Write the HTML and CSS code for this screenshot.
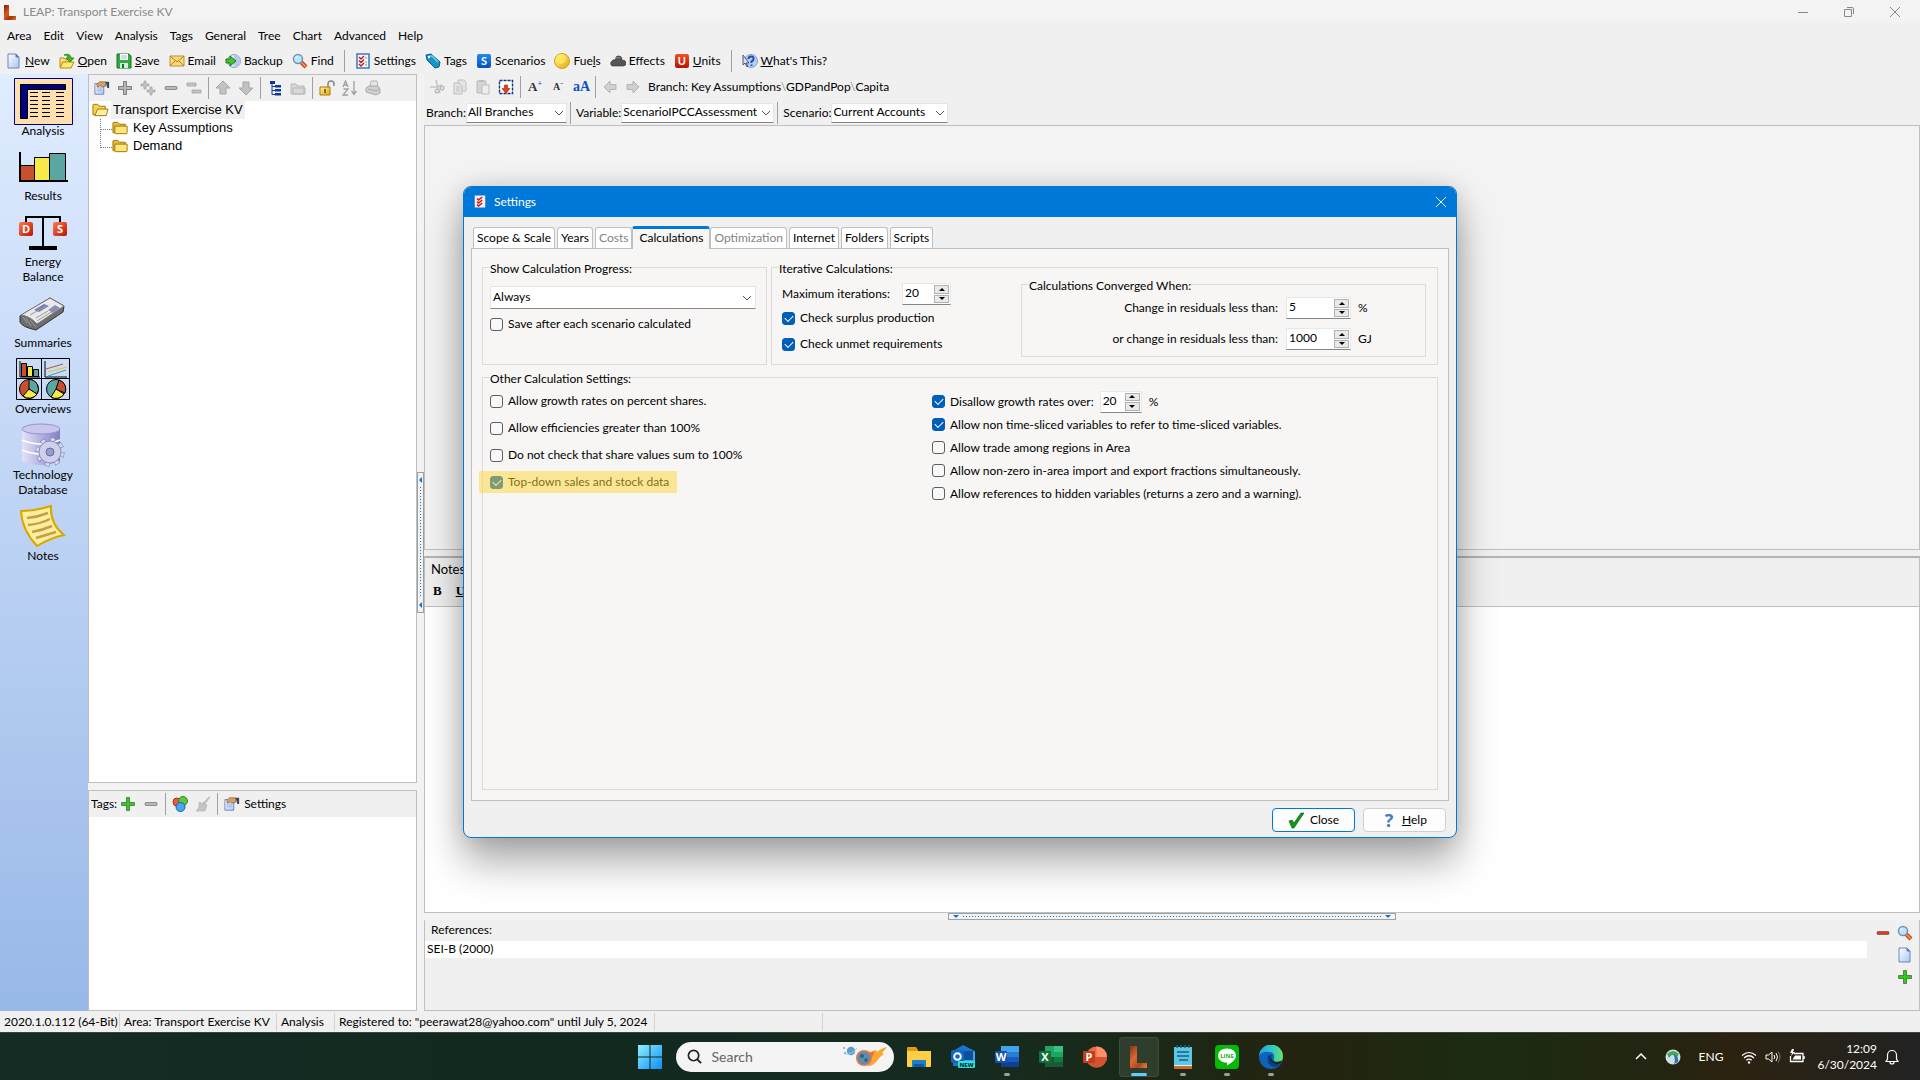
FILE: index.html
```html
<!DOCTYPE html>
<html lang="en">
<head>
<meta charset="utf-8">
<title>LEAP: Transport Exercise KV</title>
<link rel="stylesheet" href="styles.css">
</head>
<body>
<svg class="defs" aria-hidden="true">
  <defs>
    <linearGradient id="gold" x1="0" y1="0" x2="1" y2="1"><stop offset="0" stop-color="#fff3a0"/><stop offset="1" stop-color="#e0a80c"/></linearGradient>
    <linearGradient id="paper" x1="0" y1="0" x2="1" y2="1"><stop offset="0" stop-color="#fff"/><stop offset="1" stop-color="#a9c6ee"/></linearGradient>
    <linearGradient id="red" x1="0" y1="0" x2="1" y2="1"><stop offset="0" stop-color="#ff7a50"/><stop offset="1" stop-color="#b81400"/></linearGradient>
    <linearGradient id="lava" x1="0" y1="0" x2="1" y2="1"><stop offset="0" stop-color="#7a1f06"/><stop offset=".4" stop-color="#d9581c"/><stop offset=".7" stop-color="#a23408"/><stop offset="1" stop-color="#e07830"/></linearGradient>
    <linearGradient id="win" x1="0" y1="0" x2="1" y2="1"><stop offset="0" stop-color="#8df0ff"/><stop offset="1" stop-color="#0a8ff5"/></linearGradient>
    <linearGradient id="lilac" x1="0" y1="0" x2="1" y2="0"><stop offset="0" stop-color="#e4e2fa"/><stop offset=".5" stop-color="#b4b1e0"/><stop offset="1" stop-color="#8280bd"/></linearGradient>
    <linearGradient id="edgeTop" x1="0" y1="0" x2="1" y2="0"><stop offset="0" stop-color="#1aa5dc"/><stop offset=".6" stop-color="#36c9c0"/><stop offset="1" stop-color="#72e05a"/></linearGradient>
  </defs>
  <symbol id="i-leap" viewBox="0 0 16 16"><path d="M2 1h5v11h7v4H2z" fill="url(#lava)"/></symbol>
  <symbol id="i-doc" viewBox="0 0 16 16"><path d="M2 1h8l3 3v11H2z" fill="url(#paper)" stroke="#6c86c0"/><path d="M10 1v3h3" fill="#5c7dbd" stroke="#5c7dbd"/></symbol>
  <symbol id="i-open" viewBox="0 0 16 16"><path d="M1 14V5h4l1 1h6v2" fill="url(#gold)" stroke="#b58a12"/><path d="M1 15l3-6h11l-3 6z" fill="#ffe773" stroke="#b58a12"/><path d="M5 2c4-2 7 0 7 3h3l-4 4-4-4h2c0-2-2-3-4-3z" fill="#3cb82a" stroke="#14760c" stroke-width=".7"/></symbol>
  <symbol id="i-save" viewBox="0 0 16 16"><path d="M1 1h12l2 2v12H1z" fill="#2faa3c" stroke="#14742a"/><path d="M4 1h8v6H4z" fill="#fff"/><path d="M5 3h6M5 5h6" stroke="#9bc"/><path d="M4 10h8v5H4z" fill="#d7ecd9"/><path d="M6 11h2v4H6z" fill="#14742a"/></symbol>
  <symbol id="i-mail" viewBox="0 0 16 16"><path d="M1 3h14v10H1z" fill="#fbd87c" stroke="#c08e2c"/><path d="M1 3l7 6 7-6M1 13l5-5M15 13l-5-5" fill="none" stroke="#b5832a"/></symbol>
  <symbol id="i-backup" viewBox="0 0 16 16"><circle cx="9" cy="8" r="6.500" fill="#dfe8f5" stroke="#8aa4cc"/><path d="M9 1.500a6.500 6.500 0 0 1 0 13z" fill="#b6c9e6"/><path d="M1 6h4V3l6 5-6 5v-3H1z" fill="#46c22e" stroke="#187b12"/></symbol>
  <symbol id="i-find" viewBox="0 0 16 16"><path d="M8 8l6 6" stroke="#b33c10" stroke-width="4"/><path d="M9 9l5 5" stroke="#ff8a3c" stroke-width="2"/><circle cx="6" cy="6" r="4.500" fill="#bfe3fa" stroke="#6f95b5" stroke-width="1.500"/><path d="M3.500 6a3 3 0 0 1 2-2.500" stroke="#fff" fill="none"/></symbol>
  <symbol id="i-check" viewBox="0 0 16 16"><path d="M2 1h12v14H2z" fill="#f4f8ff" stroke="#3a78bf" stroke-width="1.500"/><path d="M4 4l2 2 3-3M4 7.500l2 2 3-3M4 11l2 2 3-3" stroke="#c5161c" stroke-width="1.400" fill="none"/><path d="M10 5h2M10 9h2M10 12h2" stroke="#889"/></symbol>
  <symbol id="i-tag" viewBox="0 0 16 16"><path d="M1 2l5-1 9 8-1 5-4 1-8-8z" fill="#1595c9" stroke="#0a5f8c"/><path d="M5 3h2l6 6" stroke="#6fd0f0" fill="none" stroke-width="1.500"/><circle cx="4" cy="4" r="1.200" fill="#fff"/></symbol>
  <symbol id="i-fuel" viewBox="0 0 16 16"><circle cx="8" cy="8" r="7.500" fill="url(#gold)" stroke="#d6a300"/><circle cx="7" cy="6" r="5" fill="#fff15a" opacity=".6"/></symbol>
  <symbol id="i-cloud" viewBox="0 0 16 16"><path d="M2 13a3 3 0 0 1 0-5q1-2 3-1 1-5 4-4 3 0 3 4 4 0 4 3t-3 3z" fill="#555" stroke="#333" stroke-width=".6"/><path d="M5 6q2-3 5-1" stroke="#999" fill="none"/></symbol>
  <symbol id="i-what" viewBox="0 0 16 16"><circle cx="9" cy="8" r="6.500" fill="#b9cff2" stroke="#7d9cd6"/><path d="M6.500 6q0-2.500 2.700-2.500T11.500 6q0 1.500-2 2.500v1.500M9.500 11.500v1.500" stroke="#1d4fb5" stroke-width="2" fill="none"/><path d="M1 2v10l2-2 2 4 1-1-2-3h3z" fill="#dde" stroke="#557"/></symbol>
  <symbol id="i-props" viewBox="0 0 18 16"><path d="M1 3h10v12H1z" fill="url(#paper)" stroke="#6c7fc0"/><path d="M3 7h6M3 9h6M3 11h6" stroke="#9db2df"/><path d="M3 4l3-3h7v5l-4 1-2-2-3 2z" fill="#d9a063" stroke="#7e5226" stroke-width=".7"/><path d="M13 1h4v7h-2z" fill="#3c4656"/></symbol>
  <symbol id="i-plus" viewBox="0 0 16 16"><path d="M6.500 1.500h3v5h5v3h-5v5h-3v-5h-5v-3h5z" fill="currentColor" stroke="#0006"/></symbol>
  <symbol id="i-plus2" viewBox="0 0 16 16"><path d="M4 1h2v3h3v2H6v3H4V6H1V4h3zM10 7h2v3h3v2h-3v3h-2v-3H7v-2h3z" fill="#c4c4c4" stroke="#a0a0a0" stroke-width=".7"/></symbol>
  <symbol id="i-minus" viewBox="0 0 16 16"><rect x="2" y="6.500" width="12" height="3" rx="1" fill="currentColor" stroke="#0005"/></symbol>
  <symbol id="i-minus2" viewBox="0 0 16 16"><path d="M1 3h9v3H1zM6 10h9v3H6z" fill="#c4c4c4" stroke="#a3a3a3" stroke-width=".8"/></symbol>
  <symbol id="i-up" viewBox="0 0 16 16"><path d="M8 1l7 7h-4v6H5V8H1z" fill="#c2c2c2" stroke="#a6a6a6"/></symbol>
  <symbol id="i-down" viewBox="0 0 16 16"><path d="M8 15l7-7h-4V2H5v6H1z" fill="#c2c2c2" stroke="#a6a6a6"/></symbol>
  <symbol id="i-left" viewBox="0 0 16 16"><path d="M2 8l6-6v3.500h6v5H8V14z" fill="#d0d0d0" stroke="#b4b4b4"/></symbol>
  <symbol id="i-right" viewBox="0 0 16 16"><path d="M14 8L8 2v3.500H2v5h6V14z" fill="#d0d0d0" stroke="#b4b4b4"/></symbol>
  <symbol id="i-tree" viewBox="0 0 16 16"><path d="M3 1h5v3H3zM8 5h6v2.500H8zM8 9h6v2.500H8zM8 13h6v2.500H8z" fill="#0b3a9c"/><path d="M5 4v10.500h3M5 6.500h3M5 10.500h3" stroke="#0b3a9c" fill="none"/></symbol>
  <symbol id="i-gfolder" viewBox="0 0 16 16"><path d="M1 14V4h5l1 2h7v8zM3 14V8h12v6z" fill="#d8d8d8" stroke="#b8b8b8"/></symbol>
  <symbol id="i-lock" viewBox="0 0 16 16"><path d="M9 8V4a3 3 0 0 1 6 0v2" fill="none" stroke="#888" stroke-width="1.500"/><path d="M1 7h10v8H1z" fill="url(#gold)" stroke="#a97908"/><path d="M6 9v4" stroke="#6e4c00" stroke-width="1.500"/></symbol>
  <symbol id="i-sort" viewBox="0 0 16 16"><path d="M1 7l2.500-6L6 7M2 5h3M1.500 9H6l-5 6h5M12 1v12M9.500 11l2.500 3.500L14.500 11" fill="none" stroke="#a0a0a0" stroke-width="1.300"/></symbol>
  <symbol id="i-print" viewBox="0 0 16 16"><path d="M5 6l1-5h6l1 6z" fill="#e4e4e4" stroke="#b5b5b5"/><path d="M1 8l3-2h9l2 3v4l-4 2-10-3z" fill="#cfcfcf" stroke="#ababab"/><path d="M3 9l8 2 3-2" fill="none" stroke="#aaa"/></symbol>
  <symbol id="i-cut" viewBox="0 0 16 16"><path d="M1 8h7l5-2M7 1l2 8 2 5" fill="none" stroke="#c4c4c4" stroke-width="1.500"/><circle cx="13" cy="9" r="1.800" fill="none" stroke="#bbb" stroke-width="1.500"/><circle cx="8" cy="12" r="1.800" fill="none" stroke="#bbb" stroke-width="1.500"/></symbol>
  <symbol id="i-copy" viewBox="0 0 16 16"><path d="M6 1h6l2 2v9H6z" fill="#e4e4e4" stroke="#c0c0c0"/><path d="M2 4h5l3 3v8H2z" fill="#e4e4e4" stroke="#bdbdbd"/><path d="M4 8h4M4 10h4M4 12h4" stroke="#c4c4c4"/></symbol>
  <symbol id="i-paste" viewBox="0 0 16 16"><path d="M2 2h9v12H2z" fill="#d4d4d4" stroke="#bdbdbd"/><path d="M4 1h5v2H4z" fill="#bbb"/><path d="M7 6h7v9H7z" fill="#ededed" stroke="#bdbdbd"/></symbol>
  <symbol id="i-insert" viewBox="0 0 16 16"><path d="M1.500 1.500h13v13h-13z" fill="#fff" stroke="#16307e" stroke-width="1.400" stroke-dasharray="3 1"/><path d="M6.500 6h3v3.500h2.500l-4 5-4-5h2.500z" fill="#e3401a" stroke="#a92000" stroke-width=".6"/></symbol>
  <symbol id="i-folder" viewBox="0 0 18 14"><path d="M1 12V2q0-1 1-1h4l2 2h6v9z" fill="#e9bd2e" stroke="#9c7408"/><path d="M4 13q-1 0-1-1V5h13v7q0 1-1 1z" fill="#ffe57a" stroke="#9c7408"/></symbol>
  <symbol id="i-folder-open" viewBox="0 0 18 14"><path d="M1 12V2q0-1 1-1h4l2 2h6v9z" fill="#f6d24f" stroke="#9c7408"/><path d="M3 13L6 6h11l-2 7z" fill="#fff09c" stroke="#9c7408"/></symbol>
  <symbol id="i-balls" viewBox="0 0 16 16"><circle cx="5" cy="6" r="4" fill="#ef5a3a" stroke="#b52c12"/><circle cx="11" cy="5" r="4.500" fill="#5fc73d" stroke="#2c8a14"/><circle cx="8.500" cy="11" r="4.500" fill="#4aa6ee" stroke="#1762ae"/></symbol>
  <symbol id="i-brush" viewBox="0 0 16 16"><path d="M14 1h1l-5 7-2-1zM4 6l8 3-2 6H1q4-3 3-9z" fill="#c4c4c4" stroke="#b4b4b4" stroke-width=".7"/></symbol>
  <symbol id="i-chev" viewBox="0 0 10 10"><path d="M1 3l4 4 4-4" fill="none" stroke="#555"/></symbol>
  <symbol id="i-x" viewBox="0 0 10 10"><path d="M0 0l10 10M10 0L0 10" fill="none" stroke="currentColor"/></symbol>
</svg>

<div class="app">
  <header class="titlebar">
    <svg class="icon"><use href="#i-leap"/></svg>
    <h1 class="titlebar-text">LEAP: Transport Exercise KV</h1>
    <div class="caption-buttons">
      <button aria-label="Minimize"><svg viewBox="0 0 10 10"><path d="M0 5.500h10" stroke="#888"/></svg></button>
      <button aria-label="Restore"><svg viewBox="0 0 10 10"><path d="M.5 2.500h7v7h-7zM3 .5h5q1.500 0 1.500 1.500v5" fill="none" stroke="#888"/></svg></button>
      <button aria-label="Close window"><svg viewBox="0 0 10 10"><use href="#i-x"/></svg></button>
    </div>
  </header>

  <nav class="menubar" aria-label="Menu">
    <button>Area</button><button>Edit</button><button>View</button><button>Analysis</button><button>Tags</button><button>General</button><button>Tree</button><button>Chart</button><button>Advanced</button><button>Help</button>
  </nav>

  <div class="toolbar" role="toolbar" aria-label="Main">
    <button><svg class="icon"><use href="#i-doc"/></svg><span><u>N</u>ew</span></button>
    <button><svg class="icon"><use href="#i-open"/></svg><span><u>O</u>pen</span></button>
    <button><svg class="icon"><use href="#i-save"/></svg><span><u>S</u>ave</span></button>
    <button><svg class="icon"><use href="#i-mail"/></svg><span>Email</span></button>
    <button><svg class="icon"><use href="#i-backup"/></svg><span>Backup</span></button>
    <button><svg class="icon"><use href="#i-find"/></svg><span>Find</span></button>
    <i class="sep"></i>
    <button><svg class="icon"><use href="#i-check"/></svg><span>Settings</span></button>
    <button><svg class="icon"><use href="#i-tag"/></svg><span>Tags</span></button>
    <button><b class="tile tile-blue">S</b><span>Scenarios</span></button>
    <button><svg class="icon"><use href="#i-fuel"/></svg><span>Fue<u>l</u>s</span></button>
    <button><svg class="icon"><use href="#i-cloud"/></svg><span>Effects</span></button>
    <button><b class="tile tile-red">U</b><span><u>U</u>nits</span></button>
    <i class="sep"></i>
    <button><svg class="icon"><use href="#i-what"/></svg><span><u>W</u>hat's This?</span></button>
  </div>

  <main class="workspace">
    <nav class="views" aria-label="Views">
      <button class="view view-current"><svg class="view-icon" width="59" height="47" viewBox="0 0 59 47"><path d="M.5.500h58v46H.5z" fill="#ffdfae" stroke="#000080"/><path d="M6.500 6.500h45v5h-38v29h-7z" fill="#000080" stroke="#000"/><path d="M16 14.500h8M28 14.500h8M42 14.500h8M16 18.500h8M28 18.500h8M42 18.500h8M16 22.500h8M28 22.500h8M42 22.500h8M16 26.500h8M28 26.500h8M42 26.500h8M16 30.500h8M28 30.500h8M42 30.500h8M16 34.500h8M28 34.500h8M42 34.500h8M16 38.500h8M28 38.500h8M42 38.500h8" stroke="#000"/></svg>Analysis</button>
      <button class="view"><svg class="view-icon" width="50" height="44" viewBox="0 0 50 44"><path d="M2.500 21.500h14v15h-14z" fill="#c8502f" stroke="#000"/><path d="M16.500 13.500h15v23h-15z" fill="#f5ea4a" stroke="#000"/><path d="M31.500 9.500h16v27h-16z" fill="#5ba6a0" stroke="#000"/><path d="M2 8v29h48" fill="none" stroke="#000" stroke-width="2"/></svg>Results</button>
      <button class="view"><svg class="view-icon" width="50" height="44" viewBox="0 0 50 44"><path d="M8 12V7h34v5M25 7v30" fill="none" stroke="#000" stroke-width="2"/><path d="M11 36h28v4H11z"/><rect x="1" y="12" width="14" height="14" rx="2" fill="url(#red)"/><rect x="35" y="12" width="14" height="14" rx="2" fill="url(#red)"/><text class="glyph" x="8" y="23">D</text><text class="glyph" x="42" y="23">S</text></svg>Energy<br>Balance</button>
      <button class="view"><svg class="view-icon" width="50" height="44" viewBox="0 0 50 44"><path d="M2 25L32 7l14 8-1 6-27 18Q4 36 2 31z" fill="#6e6e6e" stroke="#333"/><path d="M3 24L32 7l14 8-27 18Q12 25 3 24z" fill="#e9e9e9" stroke="#777"/><path d="M16 19l10-6 5 2-10 6z" fill="#7b7bbd"/><path d="M30 19l7-5 5 3-7 5z" fill="#8b8bb5"/><path d="M12 24l16-9M18 27l12-7M19 30l16-10M12 29l6 7M8 27l5 8M5 26l4 6" stroke="#999"/></svg>Summaries</button>
      <button class="view"><svg class="view-icon" width="54" height="44" viewBox="0 0 54 44"><path d="M.5 1.500h53v41H.5zM25.500 1.500v41M.5 21.500h53" fill="none" stroke="#000"/><path d="M5.500 6.500h5v13h-5z" fill="#c8502f" stroke="#000"/><path d="M11.500 9.500h5v10h-5z" fill="#f5ea4a" stroke="#000"/><path d="M17.500 12.500h5v7h-5z" fill="#5ba6a0" stroke="#000"/><path d="M4 4v16h20M29 4v16h22" fill="none" stroke="#000"/><path d="M30 12l17-5" stroke="#c8502f"/><path d="M32 15l19-5" stroke="#e8c030"/><path d="M32 19l18-6" stroke="#4a9a94"/><circle cx="13" cy="32" r="9.500" fill="#c8502f" stroke="#000"/><path d="M13 32V22.500a9.500 9.500 0 0 1 8 14.500z" fill="#5ba6a0" stroke="#000"/><path d="M13 32l8 5a9.500 9.500 0 0 1-14 2z" fill="#f5ea4a" stroke="#000"/><circle cx="40" cy="32" r="9.500" fill="#5ba6a0" stroke="#000"/><path d="M40 32l3-9a9.500 9.500 0 0 1 6 13z" fill="#c8502f" stroke="#000"/><path d="M40 32l8 5a9.500 9.500 0 0 1-13 3z" fill="#f5ea4a" stroke="#000"/></svg>Overviews</button>
      <button class="view"><svg class="view-icon" width="50" height="44" viewBox="0 0 50 44"><path d="M4 6v32q18 8 38 0V6z" fill="url(#lilac)"/><ellipse cx="23" cy="6" rx="19" ry="5" fill="#c9c7ee" stroke="#9794cc"/><path d="M4 17q19 8 38 0M4 27q19 8 38 0" fill="none" stroke="#fff" stroke-width="1.500"/><circle cx="32" cy="29" r="12.500" fill="none" stroke="#7775ad" stroke-width="4" stroke-dasharray="5 4.800"/><circle cx="32" cy="29" r="12.500" fill="none" stroke="#d8d8f0" stroke-width="3" stroke-dasharray="4 5.800" stroke-dashoffset="-.5"/><circle cx="32" cy="29" r="11" fill="#cfd0ea" stroke="#8f8dc0"/><circle cx="32" cy="29" r="4" fill="#9a9acb" stroke="#6b6aa8"/></svg>Technology<br>Database</button>
      <button class="view"><svg class="view-icon" width="50" height="44" viewBox="0 0 50 44"><path d="M3 7q14 0 30-5-1 18 13 29-14 3-27 11Q4 26 3 7z" fill="#ffee9c" stroke="#d9a800" stroke-width="2"/><path d="M9 14q11-1 21-5M10 21q12-1 22-6M14 28q11-2 20-6M18 34q10-3 20-6" fill="none" stroke="#c39f4a" stroke-width="2.500"/></svg>Notes</button>
    </nav>

    <div class="left-pane">
      <section class="tree-panel">
        <div class="iconbar" role="toolbar" aria-label="Tree">
          <button aria-label="Properties"><svg class="icon"><use href="#i-props"/></svg></button>
          <button class="gray" aria-label="Add"><svg class="icon"><use href="#i-plus"/></svg></button>
          <button aria-label="Add several"><svg class="icon"><use href="#i-plus2"/></svg></button>
          <button class="gray" aria-label="Delete"><svg class="icon"><use href="#i-minus"/></svg></button>
          <button aria-label="Delete several"><svg class="icon"><use href="#i-minus2"/></svg></button>
          <i class="sep"></i>
          <button aria-label="Move up"><svg class="icon"><use href="#i-up"/></svg></button>
          <button aria-label="Move down"><svg class="icon"><use href="#i-down"/></svg></button>
          <i class="sep"></i>
          <button aria-label="Expand"><svg class="icon"><use href="#i-tree"/></svg></button>
          <button aria-label="Folder"><svg class="icon"><use href="#i-gfolder"/></svg></button>
          <i class="sep"></i>
          <button aria-label="Unlock"><svg class="icon"><use href="#i-lock"/></svg></button>
          <button aria-label="Sort"><svg class="icon"><use href="#i-sort"/></svg></button>
          <button aria-label="Print"><svg class="icon"><use href="#i-print"/></svg></button>
        </div>
        <ul class="tree">
          <li><span class="node"><svg><use href="#i-folder-open"/></svg><span class="node-name node-selected">Transport Exercise KV</span></span>
            <ul class="branches">
              <li><span class="node"><svg><use href="#i-folder"/></svg><span class="node-name">Key Assumptions</span></span></li>
              <li><span class="node"><svg><use href="#i-folder"/></svg><span class="node-name">Demand</span></span></li>
            </ul>
          </li>
        </ul>
      </section>
      <section class="tags-panel">
        <div class="iconbar" role="toolbar" aria-label="Tags">
          <span>Tags:</span>
          <button class="green" aria-label="Add tag"><svg class="icon"><use href="#i-plus"/></svg></button>
          <button class="gray" aria-label="Remove tag"><svg class="icon"><use href="#i-minus"/></svg></button>
          <i class="sep"></i>
          <button aria-label="Colors"><svg class="icon"><use href="#i-balls"/></svg></button>
          <button aria-label="Clear"><svg class="icon"><use href="#i-brush"/></svg></button>
          <i class="sep"></i>
          <button class="with-text"><svg class="icon"><use href="#i-props"/></svg>Settings</button>
        </div>
      </section>
    </div>

    <div class="splitter-v"><div class="handle-v"></div></div>

    <div class="right-pane">
      <div class="iconbar data-bar" role="toolbar" aria-label="Data">
        <button aria-label="Cut"><svg class="icon"><use href="#i-cut"/></svg></button>
        <button aria-label="Copy"><svg class="icon"><use href="#i-copy"/></svg></button>
        <button aria-label="Paste"><svg class="icon"><use href="#i-paste"/></svg></button>
        <button aria-label="Insert"><svg class="icon"><use href="#i-insert"/></svg></button>
        <i class="sep"></i>
        <button class="serif-lg" aria-label="Larger font">A<sup>+</sup></button>
        <button class="serif-sm" aria-label="Smaller font">A<sup>-</sup></button>
        <button class="serif-blue" aria-label="Font">aA</button>
        <i class="sep"></i>
        <button aria-label="Back"><svg class="icon"><use href="#i-left"/></svg></button>
        <button aria-label="Forward"><svg class="icon"><use href="#i-right"/></svg></button>
        <span class="path">Branch: Key Assumptions<span class="slash">\</span>GDPandPop<span class="slash">\</span>Capita</span>
      </div>
      <div class="filters">
        <label for="f-branch">Branch:</label>
        <span class="select select-s"><select id="f-branch"><option>All Branches</option></select><svg><use href="#i-chev"/></svg></span>
        <i class="sep"></i>
        <label for="f-variable">Variable:</label>
        <span class="select select-l"><select id="f-variable"><option>ScenarioIPCCAssessment</option></select><svg><use href="#i-chev"/></svg></span>
        <i class="sep"></i>
        <label for="f-scenario">Scenario:</label>
        <span class="select select-m"><select id="f-scenario"><option>Current Accounts</option></select><svg><use href="#i-chev"/></svg></span>
      </div>
      <section class="chart-area"></section>
      <section class="notes">
        <header class="notes-head">
          <h2 class="notes-title">Notes</h2>
          <div class="notes-tools"><button>B</button><button><u>U</u></button></div>
        </header>
      </section>
      <div class="splitter-h"><div class="handle-h"></div></div>
      <section class="refs">
        <div class="refs-main">
          <h2 class="refs-title">References:</h2>
          <p class="refs-item">SEI-B (2000)</p>
        </div>
        <div class="refs-tools">
          <button class="redi" aria-label="Remove reference"><svg class="icon"><use href="#i-minus"/></svg></button>
          <button aria-label="Find reference"><svg class="icon"><use href="#i-find"/></svg></button>
          <button class="col2" aria-label="New reference"><svg class="icon"><use href="#i-doc"/></svg></button>
          <button class="col2 green" aria-label="Add reference"><svg class="icon"><use href="#i-plus"/></svg></button>
        </div>
      </section>
    </div>
  </main>

  <footer class="status">
    <span class="cell-version">2020.1.0.112 (64-Bit)</span><span class="cell-area">Area: Transport Exercise KV</span><span class="cell-view">Analysis</span><span class="cell-user">Registered to: "peerawat28@yahoo.com" until July 5, 2024</span><span class="cell-blank"></span>
  </footer>

  <div class="taskbar">
    <div class="dock">
      <button aria-label="Start"><svg viewBox="0 0 24 24"><path d="M0 0h11.500v11.500H0zM12.500 0H24v11.500H12.500zM0 12.500h11.500V24H0zM12.500 12.500H24V24H12.500z" fill="url(#win)"/></svg></button>
      <label class="search"><svg class="search-glass" viewBox="0 0 16 16"><circle cx="7" cy="7" r="5.500" fill="none" stroke="#222" stroke-width="1.800"/><path d="M11 11l4 4" stroke="#222" stroke-width="2"/></svg><input type="search" placeholder="Search" aria-label="Search"><svg class="search-art" viewBox="0 0 46 22"><path d="M15 9Q24 4 30 6q1-2 5-2-1 1 0 2 4-4 10-5-2 3-5 6l2 1q-5 3-7 7-4 5-9 5z" fill="#f9a833"/><path d="M20 6q8 2 12-1-2 9-6 13z" fill="#f3643a"/><circle cx="22" cy="12" r="8" fill="#ee7443"/><circle cx="22" cy="12" r="6.500" fill="#5b8fae"/><circle cx="20" cy="10" r="2" fill="#31617e"/><circle cx="24" cy="14" r="1.800" fill="#31617e"/><circle cx="9" cy="5" r="4.200" fill="#5b9fc6"/><path d="M3 8q7 1 12-6" fill="none" stroke="#a9cbe0"/><circle cx="2" cy="2" r="1" fill="#7ab"/><circle cx="3" cy="7" r="1" fill="#7ab"/></svg></label>
      <button aria-label="File Explorer"><svg viewBox="0 0 24 24"><path d="M0 3q0-1 1-1h8l2 3v4H0z" fill="#e09c09"/><path d="M0 6h24v15q0 1-1 1H1q-1 0-1-1z" fill="#ffce45"/><path d="M5 16q0-1 1-1h12q1 0 1 1v6H5z" fill="#1680cf"/><path d="M7 19h10v3H7z" fill="#0a5c9f"/></svg></button>
      <button aria-label="Outlook"><svg viewBox="0 0 24 24"><path d="M2 6l10-6 12 6v15H2z" fill="#1b74c9"/><path d="M12 12L24 6v15H10z" fill="#35a8ee"/><path d="M4 6h18v9H8z" fill="#0f4f9f"/><rect y="5" width="13" height="13" rx="2" fill="#1067c5"/><circle cx="6.500" cy="11.500" r="3.300" fill="none" stroke="#fff" stroke-width="2"/><rect x="7" y="16" width="17" height="7" rx="1" fill="#2de3dc"/><text class="tag-new" x="15.500" y="22">NEW</text></svg></button>
      <button class="running" aria-label="Word"><svg viewBox="0 0 24 24"><path d="M6 1h18v6H6z" fill="#41a5ee"/><path d="M6 7h18v5H6z" fill="#2b7cd3"/><path d="M6 12h18v5H6z" fill="#185abd"/><path d="M6 17h18v5H6z" fill="#103f91"/><rect y="6" width="12" height="12" rx="1" fill="#1850ad"/><text class="glyph" x="6" y="16">W</text></svg></button>
      <button aria-label="Excel"><svg viewBox="0 0 24 24"><path d="M6 1h18v21H6z" fill="#21a366"/><path d="M15 1h9v6h-9z" fill="#33c481"/><path d="M6 12h18v10H6z" fill="#185c37"/><path d="M15 12h9v5h-9z" fill="#107c41"/><rect y="6" width="12" height="12" rx="1" fill="#0f7038"/><text class="glyph" x="6" y="16">X</text></svg></button>
      <button aria-label="PowerPoint"><svg viewBox="0 0 24 24"><circle cx="13.500" cy="12" r="10.500" fill="#ed6c47"/><path d="M13.500 1.500A10.500 10.500 0 0 1 24 12H13.500z" fill="#ff8f6b"/><path d="M3 12h21a10.500 10.500 0 0 1-21 0z" fill="#d35230"/><rect y="6" width="12" height="12" rx="1" fill="#c43e1c"/><text class="glyph" x="6" y="16">P</text></svg></button>
      <button class="running active" aria-label="LEAP"><svg viewBox="0 0 24 24"><path d="M3 1h7v17h10v5H3z" fill="url(#lava)"/></svg></button>
      <button class="running" aria-label="Notepad"><svg viewBox="0 0 24 24"><path d="M3 20h18v4H3z" fill="#c86a28"/><path d="M3 19h18v2H3z" fill="#eee"/><path d="M3 2h18v18H3z" fill="#5dc6e4"/><path d="M6 0v3M10 0v3M14 0v3M18 0v3" stroke="#1a6788" stroke-width="1.500"/><path d="M6 7h12M6 11h12M8 15h9" stroke="#14607f" stroke-width="1.500"/></svg></button>
      <button class="running" aria-label="LINE"><svg viewBox="0 0 24 24"><rect width="24" height="24" rx="4" fill="#05b905"/><path d="M12 3.500c5.500 0 9 3.200 9 7.200 0 4-5 7.300-9 9.800v-2.800c-5 0-9-3-9-7s3.500-7.200 9-7.200z" fill="#fff"/><text class="tag-line" x="12" y="13">LINE</text></svg></button>
      <button class="running" aria-label="Edge"><svg viewBox="0 0 24 24"><circle cx="12" cy="12" r="12" fill="#0f63b8"/><path d="M0 11A12 12 0 0 1 24 12q0 5-6 5-4 0-3-3 1-7-5-7Q3 6 0 11z" fill="url(#edgeTop)"/><path d="M9 11q-2 9 6 11 4 0 7-4-8 3-10-3-1-3 1-5-2-1-4 1z" fill="#0b3f83"/><path d="M13 10q-3 5 4 7l6-1-1 2q-7 3-10-2-2-3 1-6z" fill="#10231a"/></svg></button>
    </div>
    <div class="tray">
      <svg class="tray-icon" viewBox="0 0 16 16"><path d="M3 10l5-5 5 5" fill="none" stroke="#fff" stroke-width="1.500"/></svg>
      <svg class="tray-icon globe" viewBox="0 0 16 16"><circle cx="8" cy="8" r="7.500" fill="#cfe0ea"/><path d="M2 5q6-6 12 0l-2 3q-4-5-8 1z" fill="#4aa556"/><path d="M8 5q6 1 5 8l-4 2q2-5-1-10z" fill="#2a77ab"/></svg>
      <span class="lang">ENG</span>
      <span class="tray-group">
        <svg class="tray-icon" viewBox="0 0 16 16"><path d="M1 6.500q7-6 14 0M3 9q5-4.500 10 0M5.300 11.300q2.700-2.400 5.400 0" fill="none" stroke="#fff" stroke-width="1.200"/><circle cx="8" cy="13.500" r="1.200" fill="#fff"/></svg>
        <svg class="tray-icon" viewBox="0 0 16 16"><path d="M1 6h2.500L7 3v10l-3.500-3H1z" fill="none" stroke="#fff"/><path d="M9 6q1.500 2 0 4M11 4q3 4 0 8" fill="none" stroke="#fff"/><path d="M13 2.500q4 5.500 0 11" fill="none" stroke="#777"/></svg>
        <svg class="tray-icon" viewBox="0 0 16 16"><path d="M5 4.500h9v8H1.500V7" fill="none" stroke="#fff" stroke-width="1.300"/><path d="M6 6.500h6v4H3.500z" fill="#fff"/><path d="M15 7v3" stroke="#fff" stroke-width="1.500"/><path d="M3 0L1 4h2L2 7l4-4H4l1-3z" fill="#fff"/></svg>
      </span>
      <span class="clock"><span>12:09</span><span>6/30/2024</span></span>
      <svg class="tray-icon" viewBox="0 0 16 16"><path d="M2 12.500L3.500 10V6a4.500 4.500 0 0 1 9 0v4l1.500 2.500zM6 13a2 2 0 0 0 4 0" fill="none" stroke="#fff" stroke-width="1.200"/></svg>
    </div>
  </div>
</div>

<section class="dialog" role="dialog" aria-labelledby="dlg-title">
  <header class="dialog-title">
    <svg class="icon-12" viewBox="0 0 16 16"><path d="M1 0h14v16H1z" fill="#f6f1ee"/><path d="M4 4l2 2 5-4M4 8l2 2 5-4M4 12l2 2 5-4" stroke="#c5161c" stroke-width="2" fill="none"/></svg>
    <h2 id="dlg-title">Settings</h2>
    <button aria-label="Close dialog"><svg viewBox="0 0 10 10"><use href="#i-x"/></svg></button>
  </header>
  <div class="dialog-body">
    <div class="tabs" role="tablist">
      <button role="tab">Scope &amp; Scale</button><button role="tab">Years</button><button role="tab" disabled>Costs</button><button role="tab" class="tab-current" aria-selected="true">Calculations</button><button role="tab" disabled>Optimization</button><button role="tab">Internet</button><button role="tab">Folders</button><button role="tab">Scripts</button>
    </div>
    <div class="page" role="tabpanel">
      <div class="row-top">
        <fieldset class="group progress">
          <legend>Show Calculation Progress:</legend>
          <span class="select select-wide"><select aria-label="Show Calculation Progress"><option>Always</option></select><svg><use href="#i-chev"/></svg></span>
          <label class="tick"><input type="checkbox">Save after each scenario calculated</label>
        </fieldset>
        <fieldset class="group iterative">
          <legend>Iterative Calculations:</legend>
          <div class="iter-left">
            <div class="field"><label for="max-it">Maximum iterations:</label><span class="spin spin-m"><input id="max-it" type="text" value="20"><span class="spin-buttons"><button aria-label="Up"></button><button aria-label="Down"></button></span></span></div>
            <label class="tick"><input type="checkbox" checked>Check surplus production</label>
            <label class="tick"><input type="checkbox" checked>Check unmet requirements</label>
          </div>
          <fieldset class="group converged">
            <legend>Calculations Converged When:</legend>
            <div class="conv-row"><label for="res-pc">Change in residuals less than:</label><span class="spin spin-l"><input id="res-pc" type="text" value="5"><span class="spin-buttons"><button aria-label="Up"></button><button aria-label="Down"></button></span></span><span class="unit">%</span></div>
            <div class="conv-row"><label for="res-gj">or change in residuals less than:</label><span class="spin spin-l"><input id="res-gj" type="text" value="1000"><span class="spin-buttons"><button aria-label="Up"></button><button aria-label="Down"></button></span></span><span class="unit">GJ</span></div>
          </fieldset>
        </fieldset>
      </div>
      <fieldset class="group other">
        <legend>Other Calculation Settings:</legend>
        <div class="other-left">
          <label class="tick"><input type="checkbox">Allow growth rates on percent shares.</label>
          <label class="tick"><input type="checkbox">Allow efficiencies greater than 100%</label>
          <label class="tick"><input type="checkbox">Do not check that share values sum to 100%</label>
          <label class="tick marked"><input type="checkbox" checked>Top-down sales and stock data</label>
        </div>
        <div class="other-right">
          <div class="field"><label class="tick"><input type="checkbox" checked>Disallow growth rates over:</label><span class="spin spin-s"><input type="text" value="20" aria-label="Growth rate limit"><span class="spin-buttons"><button aria-label="Up"></button><button aria-label="Down"></button></span></span><span class="unit">%</span></div>
          <label class="tick"><input type="checkbox" checked>Allow non time-sliced variables to refer to time-sliced variables.</label>
          <label class="tick"><input type="checkbox">Allow trade among regions in Area</label>
          <label class="tick"><input type="checkbox">Allow non-zero in-area import and export fractions simultaneously.</label>
          <label class="tick"><input type="checkbox">Allow references to hidden variables (returns a zero and a warning).</label>
        </div>
      </fieldset>
    </div>
    <footer class="dialog-buttons">
      <button class="btn btn-default"><svg class="icon" viewBox="0 0 16 16"><path d="M1 9l3-1 2 3 7-10 3 0L6 16H4z" fill="#0a9a12" stroke="#064d1c" stroke-width=".6"/></svg>Close</button>
      <button class="btn"><b class="question">?</b><span><u>H</u>elp</span></button>
    </footer>
  </div>
</section>
</body>
</html>
```
FILE: styles.css
```css
* { box-sizing: border-box; }
body { margin: 0; font: 12px/16px Lato, "Open Sans", sans-serif; color: #000; background: #f0f0f0; }
button { font: inherit; color: inherit; background: none; border: 0; padding: 0; margin: 0; }
input, select { font: inherit; color: inherit; }
h1, h2, p, ul { margin: 0; padding: 0; font: inherit; list-style: none; }
svg { display: block; }
.defs { position: absolute; width: 0; height: 0; }
.icon { width: 16px; height: 16px; flex: none; overflow: visible; }
.icon-12 { width: 12px; height: 13px; }
.glyph { font: bold 11px "Open Sans", sans-serif; fill: #fff; text-anchor: middle; }
.sep { width: 1px; background: #a0a0a0; flex: none; }

.app { display: flex; flex-direction: column; height: 100vh; overflow: hidden; }
.titlebar { display: flex; align-items: center; height: 23px; padding-left: 2px; background: #f3f3f3; color: #8a8a8a; }
.titlebar-text { margin-left: 5px; flex: 1; }
.caption-buttons { display: flex; padding-right: 2px; }
.caption-buttons button { width: 46px; height: 20px; display: grid; place-items: center; color: #888; }
.caption-buttons svg { width: 10px; height: 10px; overflow: visible; }

.menubar { display: flex; gap: 12px; height: 26px; padding-left: 7px; align-items: center; }
.toolbar { display: flex; height: 25px; padding: 0 0 2px 6px; align-items: center; gap: 9px; }
.toolbar button { display: flex; align-items: center; gap: 3px; white-space: nowrap; }
.toolbar .sep { height: 22px; margin: 0 1px; }
.tile { width: 14px; height: 14px; margin: 0 1px; border-radius: 2px; color: #fff; font-size: 11px; line-height: 14px; text-align: center; }
.tile-blue { background: linear-gradient(#1f8bf5, #0552ba); }
.tile-red { background: linear-gradient(#f0502a, #b81400); }

.workspace { flex: 1; min-height: 0; display: flex; }
.views { width: 88px; padding-right: 2px; display: flex; flex-direction: column; background: linear-gradient(#e0ecff, #98b8e8); }
.view { display: flex; flex-direction: column; align-items: center; padding-top: 7px; line-height: 15px; flex: none; }
.view-current { padding-top: 4px; line-height: 12px; }
.view-icon { flex: none; }

.left-pane { width: 329px; display: flex; flex-direction: column; gap: 7px; background: #f3f3f3; }
.tree-panel, .tags-panel { border: 1px solid #bfbfbf; background: #fff; }
.tree-panel { flex: 1; }
.tags-panel { height: 221px; }
.iconbar { display: flex; align-items: center; gap: 7px; height: 26px; padding-left: 5px; background: #f0f0f0; }
.iconbar .sep { height: 22px; margin: 0 -1px; }
.gray { color: #b8b8b8; }
.green { color: #35c81e; }
.redi { color: #e23a1c; }
.tags-panel .iconbar { padding-left: 2px; }
.tags-panel .iconbar > span { margin-right: -4px; }
.with-text { display: flex; gap: 4px; }

.tree { font: 13px/18px "Liberation Sans", Arial, sans-serif; padding-left: 3px; }
.node { display: flex; align-items: center; gap: 2px; height: 18px; }
.node svg { width: 17px; height: 14px; }
.node-name { padding: 0 2px; }
.node-selected { background: #f0f0f0; }
.branches { margin-left: 8px; }
.branches li { display: flex; }
.branches li::before { content: ""; width: 11px; height: 10px; border-left: 1px dotted #777; border-bottom: 1px dotted #777; }
.branches li:last-child::before { height: 18px; margin-top: -8px; }

.splitter-v { width: 7px; display: flex; align-items: center; background: #f3f3f3; }
.handle-v { width: 7px; height: 15%; border: 1px solid #a0a0a0; display: flex; flex-direction: column; align-items: center; justify-content: space-between; padding: 4px 0; background: repeating-linear-gradient(#0078d7 0 1px, transparent 1px 3px) center / 1px calc(100% - 28px) no-repeat; }
.handle-v::before, .handle-v::after { content: ""; border: 3px solid transparent; border-right-color: #0078d7; border-left: 0; }

.right-pane { flex: 1; min-width: 0; display: flex; flex-direction: column; }
.data-bar .path { white-space: nowrap; }
.slash { color: #999; }
.serif-lg, .serif-sm, .serif-blue { width: 16px; font-family: "Liberation Serif", serif; font-weight: bold; color: #333; white-space: nowrap; }
.serif-lg { font-size: 13px; }
.serif-sm { font-size: 10px; }
.serif-blue { font-size: 14px; color: #0b4fc4; }
.iconbar sup { font-size: 8px; line-height: 0; color: #2a5bc4; }
.filters { display: flex; align-items: center; height: 25px; padding-left: 2px; }
.filters .sep { height: 22px; margin: 0 5px 0 3px; }
.select { display: grid; align-items: center; }
.select > * { grid-area: 1 / 1; }
.select select { appearance: none; width: 100%; height: 20px; padding: 0 14px 1px 1px; border: 1px solid #e5e5e5; border-bottom-color: #858585; background: #fff; border-radius: 0; }
.select svg { width: 10px; height: 10px; justify-self: end; margin-right: 3px; pointer-events: none; }
.select-s { width: 101px; }
.select-m { width: 117px; }
.select-l { width: 153px; }
.chart-area { flex: 0 0 425px; border: 1px solid #bfbfbf; background: #f3f3f3; }
.notes { flex: 1; margin-top: 6px; border: 1px solid #bfbfbf; border-top: 2px solid #b4b4b4; background: #fff; }
.notes-head { height: 49px; background: #f0f0f0; border-bottom: 1px solid #bfbfbf; padding: 1px 6px; }
.notes-title { font-size: 13px; line-height: 20px; }
.notes-tools { display: flex; gap: 14px; font: bold 13px/24px "Liberation Serif", serif; padding-left: 2px; }
.splitter-h { display: flex; justify-content: center; height: 7px; background: #f3f3f3; }
.handle-h { width: 30%; height: 7px; border: 1px solid #a0a0a0; display: flex; align-items: center; justify-content: space-between; padding: 0 4px; background: repeating-linear-gradient(90deg, #0078d7 0 1px, transparent 1px 3px) center / calc(100% - 28px) 1px no-repeat; }
.handle-h::before, .handle-h::after { content: ""; border: 3px solid transparent; border-top-color: #0078d7; border-bottom: 0; }
.refs { height: 91px; display: flex; border: 1px solid #bfbfbf; border-top: 0; }
.refs-main { flex: 1; }
.refs-title { padding: 2px 6px 3px; }
.refs-item { background: #fff; height: 17px; padding-left: 2px; }
.refs-tools { display: grid; grid-template-columns: 16px 16px; grid-auto-rows: 16px; gap: 6px; padding: 5px 6px 0 8px; align-content: start; }
.col2 { grid-column: 2; }

.status { display: flex; align-items: center; height: 21px; flex: none; }
.status span { height: 18px; line-height: 18px; padding-left: 4px; border-right: 1px solid #d4d4d4; white-space: nowrap; }
.cell-version { width: 120px; }
.cell-area { width: 157px; }
.cell-view { width: 58px; }
.cell-user { width: 320px; }
.cell-blank { width: 168px; }

.taskbar { display: grid; grid-template-columns: 1fr auto 1fr; align-items: center; height: 48px; flex: none; color: #fff; border-top: 1px solid #3c4540; background: linear-gradient(90deg, #142c24 0%, #12291f 30%, #152b20 50%, #1a2917 60%, #24230f 68%, #1b2b14 77%, #222511 86%, #2c2210 90%, #222 100%); }
.dock { grid-column: 2; display: flex; align-items: center; }
.dock button { position: relative; width: 44px; height: 46px; display: grid; place-items: center; }
.dock button svg { width: 24px; height: 24px; }
.running::after { content: ""; position: absolute; bottom: 4px; left: 19px; width: 6px; height: 3px; border-radius: 2px; background: #9aa09a; }
.active::before { content: ""; position: absolute; inset: 3px 2px; border-radius: 4px; background: #ffffff18; border: 1px solid #ffffff14; }
.active::after { left: 14px; width: 16px; background: #60cdff; }
.search { display: flex; align-items: center; width: 218px; height: 30px; margin: 0 3px 0 4px; padding: 0 6px 0 11px; border-radius: 15px; background: #f3f4f3; }
.search-glass { width: 15px; height: 15px; flex: none; }
.search input { flex: 1; min-width: 0; border: 0; background: none; padding: 0 0 0 10px; font-size: 14px; }
.search input::placeholder { color: #666; }
.search-art { width: 46px; height: 22px; flex: none; }
.tag-new { font: bold 6px "Open Sans", sans-serif; text-anchor: middle; fill: #012; }
.tag-line { font: bold 6px "Open Sans", sans-serif; text-anchor: middle; fill: #05b905; }
.tray { grid-column: 3; justify-self: end; display: flex; align-items: center; padding-right: 20px; }
.tray-icon { width: 16px; height: 16px; overflow: visible; }
.globe { margin-left: 16px; }
.lang { margin: 0 18px; }
.tray-group { display: flex; gap: 8px; }
.clock { display: flex; flex-direction: column; text-align: right; margin: 0 7px 0 12px; }

.dialog { position: absolute; top: 186px; left: 0; right: 0; margin: 0 auto; width: 994px; max-width: 100%; border: 1px solid #0078d7; border-radius: 8px; overflow: hidden; background: #f0f0f0; box-shadow: 0 24px 40px #0005, 0 0 24px #0002; }
.dialog-title { display: flex; align-items: center; height: 30px; padding: 0 10px 1px; background: #0078d7; color: #fff; }
.dialog-title h2 { flex: 1; margin-left: 8px; }
.dialog-title svg { overflow: visible; }
.dialog-title button svg { width: 10px; height: 10px; }
.dialog-body { padding: 9px 7px 5px; }
.tabs { display: flex; align-items: flex-end; gap: 2px; padding-left: 2px; height: 22px; }
.tabs button { height: 21px; padding: 0 3px; background: #fff; border: 1px solid #bfbfbf; border-bottom: 0; border-radius: 3px 3px 0 0; }
.tabs button:disabled { color: #838383; }
.tabs .tab-current { height: 23px; margin: 0 -2px -1px; padding: 0 6px 2px; background: #f7f6f5; border-top: 3px solid #0078d7; position: relative; }
.page { border: 1px solid #bfbfbf; background: #f7f6f5; padding: 10px; height: 553px; display: flex; flex-direction: column; }
.row-top { display: flex; gap: 4px; height: 106px; }
.group { border: 1px solid #dcdcdc; margin: 0; padding: 0 7px; min-width: 0; }
.group legend { padding: 0; height: 16px; line-height: 20px; }
.progress { width: 285px; }
.iterative { flex: 1; display: flex; }
.tick { display: flex; align-items: center; gap: 5px; height: 16px; white-space: nowrap; }
.tick input { appearance: none; flex: none; display: grid; place-items: center; margin: 0; width: 13px; height: 13px; border: 1px solid #5e5e5e; border-radius: 3px; background: #f8f8f8; }
.tick input:checked { background: #005fb8; border-color: #005fb8; }
.tick input:checked::after { content: ""; width: 7px; height: 4px; margin-bottom: 2px; border: solid #fff; border-width: 0 0 1px 1px; transform: rotate(-45deg); }
.select-wide { margin: 11px 3px 7px 0; width: 266px; }
.select-wide select { height: 23px; padding-left: 2px; }
.select-wide svg { margin-right: 4px; }
.field { display: flex; align-items: center; height: 22px; }
.spin { display: flex; height: 22px; background: #fff; border: 1px solid #e8e8e8; border-bottom-color: #858585; }
.spin input { flex: 1; width: 0; min-width: 0; border: 0; padding: 0 0 2px 2px; background: none; }
.spin-buttons { width: 16px; display: flex; flex-direction: column; gap: 1px; padding: 1px 1px 1px 0; }
.spin-buttons button { flex: 1; display: grid; place-items: center; background: #e9e9e9; border: 1px solid #b0b0b0; }
.spin-buttons button::before { content: ""; border: 3px solid transparent; border-top: 0; border-bottom-color: #000; }
.spin-buttons button:last-child::before { border: 3px solid transparent; border-bottom: 0; border-top-color: #000; }
.spin-s { width: 42px; margin-left: 6px; }
.spin-m { width: 49px; margin-left: 12px; }
.spin-l { width: 65px; margin-left: 8px; }
.unit { margin-left: 7px; width: 67px; }
.iter-left { flex: 1; padding: 8px 0 0 3px; }
.iter-left .tick { margin: 5px 0 10px; }
.converged { width: 405px; height: 81px; margin: 1px 4px 0 0; padding: 5px 0 0 7px; }
.conv-row { display: flex; justify-content: flex-end; align-items: center; height: 22px; margin-bottom: 9px; }
.other { flex: 1; margin-top: 4px; display: flex; }
.other-left { width: 442px; padding-top: 8px; display: flex; flex-direction: column; gap: 11px; align-items: flex-start; }
.marked { position: relative; }
.marked::after { content: ""; position: absolute; inset: -3px -8px -3px -11px; background: #fdd53380; }
.other-right { display: grid; grid-auto-rows: 23px; align-content: start; align-items: center; padding-top: 5px; }
.dialog-buttons { display: flex; justify-content: flex-end; gap: 8px; padding: 7px 3px 0; }
.btn { width: 83px; height: 24px; display: flex; align-items: center; justify-content: center; gap: 6px; background: #fdfdfd; border: 1px solid #d0d0d0; border-radius: 4px; }
.btn-default { border-color: #0078d7; }
.question { font: bold 18px/20px "Open Sans", sans-serif; color: #3f7fc0; width: 14px; }
```
